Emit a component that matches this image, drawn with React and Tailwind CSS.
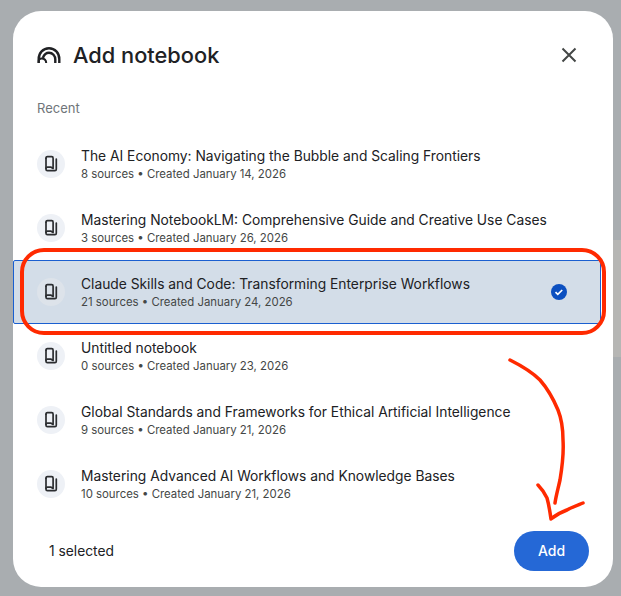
const rows = [
  { t: "The AI Economy: Navigating the Bubble and Scaling Frontiers", s: "8 sources • Created January 14, 2026" },
  { t: "Mastering NotebookLM: Comprehensive Guide and Creative Use Cases", s: "3 sources • Created January 26, 2026" },
  { t: "Claude Skills and Code: Transforming Enterprise Workflows", s: "21 sources • Created January 24, 2026", sel: true },
  { t: "Untitled notebook", s: "0 sources • Created January 23, 2026" },
  { t: "Global Standards and Frameworks for Ethical Artificial Intelligence", s: "9 sources • Created January 21, 2026" },
  { t: "Mastering Advanced AI Workflows and Knowledge Bases", s: "10 sources • Created January 21, 2026" },
];

function NotebookIcon() {
  return (
    <svg width="18" height="18" viewBox="0 0 18 18" fill="none" stroke="#2b2d30" strokeWidth="1.700" strokeLinejoin="round" strokeLinecap="round">
      <path d="M4 3.200v11c0 .8.600 1.400 1.400 1.400h7.500c.8 0 1.400-.6 1.400-1.400V4" />
      <path d="M4 3.200c0-.9.600-1.500 1.400-1.500h4.300c.8 0 1.400.6 1.400 1.500v10.300l-2-1.300H5.400c-.6 0-1.400.3-1.400 1.100" />
    </svg>
  );
}

export default function App() {
  return (
    <div className="relative w-[621px] h-[596px] overflow-hidden bg-[#a9adb0] font-['Inter',sans-serif]">
      <div className="absolute right-0 top-[240px] w-2 h-[117px] bg-[#b6b6b4]" />
      <div className="absolute left-[13px] top-[11px] w-[600px] h-[576px] bg-white rounded-[28px] flex flex-col">
        <div className="h-[88px] flex items-center pl-6 pr-[36px] shrink-0">
          <svg width="24" height="20" viewBox="0 0 24 20" fill="none" stroke="#202124" strokeWidth="2.400" strokeLinecap="butt" className="mr-3">
            <path d="M1.700 18v-4C1.700 8 6 3.200 12 3.200S22.300 8 22.300 14v4" />
            <path d="M5.800 13C7 10 9.200 7.800 12 7.800c3.600 0 6.300 3 6.300 6.700V18" />
            <path d="M1.700 18v-2c0-1.400 1.200-2.600 2.800-2.600 2.800 0 4.700 1.800 4.700 4.600" strokeWidth="2" />
          </svg>
          <span className="text-[21.800px] font-[450] text-[#202124]">Add notebook</span>
          <svg width="16" height="16" viewBox="0 0 16 16" stroke="#444746" strokeWidth="2" className="ml-auto">
            <path d="M1.500 1.500l13 13M14.500 1.500l-13 13" />
          </svg>
        </div>
        <div className="h-[33px] pl-6 text-[13px] leading-[18px] text-[#70757a] shrink-0">Recent</div>
        <div className="flex flex-col w-[588px]">
          {rows.map((r) => (
            <div key={r.t} className={`h-16 flex items-center pl-[23px] pr-[33px] rounded-[2px] border ${r.sel ? "bg-[#d3dde8] border-[#1a5fd0]" : "border-transparent"}`}>
              <div className={`w-7 h-7 rounded-full flex items-center justify-center shrink-0 ${r.sel ? "bg-[#dde3ea]" : "bg-[#eef1f6]"}`}>
                <NotebookIcon />
              </div>
              <div className="ml-4 flex-1 min-w-0">
                <div className="text-[13.800px] leading-[18px] text-[#202124] whitespace-nowrap">{r.t}</div>
                <div className="text-[11.400px] leading-4 mt-px text-[#444746] whitespace-nowrap">{r.s}</div>
              </div>
              {r.sel && (
                <svg width="16" height="16" viewBox="0 0 16 16" className="shrink-0">
                  <circle cx="8" cy="8" r="8" fill="#0b4fc0" />
                  <path d="M4.500 8.200l2.300 2.200 4.400-4.400" fill="none" stroke="#fff" strokeWidth="1.700" />
                </svg>
              )}
            </div>
          ))}
        </div>
        <div className="flex items-center justify-between pl-9 pr-6 mt-[15px]">
          <span className="text-[13.800px] text-[#202124]">1 selected</span>
          <button className="w-[75px] h-10 rounded-full bg-[#2568d6] text-white text-sm font-[450]">Add</button>
        </div>
      </div>
      <svg className="absolute left-0 top-0 pointer-events-none" width="621" height="596" viewBox="0 0 621 596" fill="none" stroke="#ff2a00" strokeLinecap="round" strokeLinejoin="round">
        <rect x="22" y="250" width="582" height="83" rx="22" strokeWidth="4" />
        <path d="M510 360C522 366 532 372 540 380C547 388 553 398 558 410C562 420 563 430 563 440C564 455 562 468 560 480C558 489 556 496 555 503" strokeWidth="3.500" />
        <path d="M538 485C543 490 545 494 547 498C549 505 550 512 551 519C556 515 561 512 567 510C572 507 578 505 583 503" strokeWidth="3.500" />
      </svg>
    </div>
  );
}
